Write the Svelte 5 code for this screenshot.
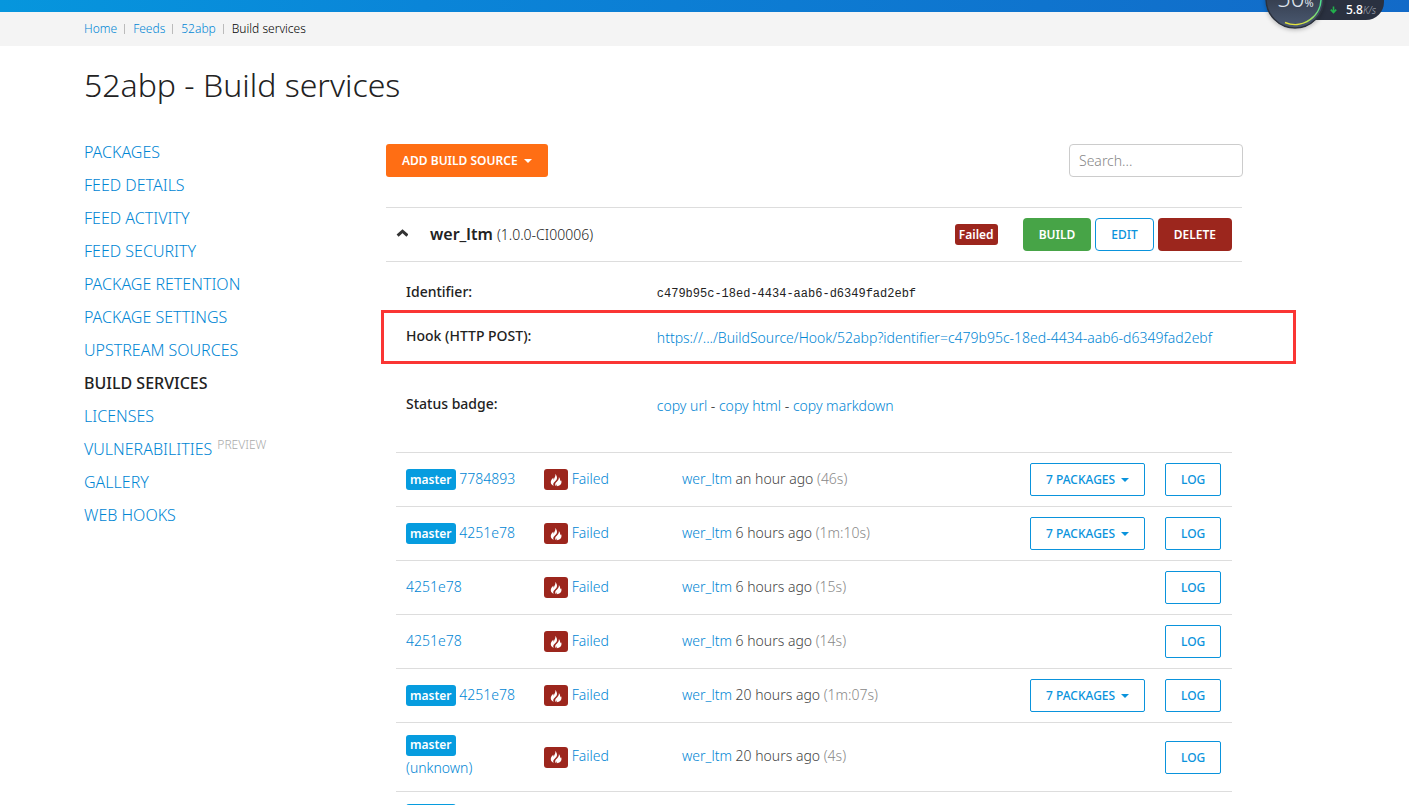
<script>
  const crumbs = ['Home', 'Feeds', '52abp'];

  const nav = [
    { label: 'Packages' },
    { label: 'Feed details' },
    { label: 'Feed activity' },
    { label: 'Feed security' },
    { label: 'Package retention' },
    { label: 'Package settings' },
    { label: 'Upstream sources' },
    { label: 'Build services', active: true },
    { label: 'Licenses' },
    { label: 'Vulnerabilities', tag: 'Preview' },
    { label: 'Gallery' },
    { label: 'Web hooks' }
  ];

  const builds = [
    { branch: 'master', commit: '7784893', when: 'an hour ago', took: '46s', packages: 7 },
    { branch: 'master', commit: '4251e78', when: '6 hours ago', took: '1m:10s', packages: 7 },
    { commit: '4251e78', when: '6 hours ago', took: '15s' },
    { commit: '4251e78', when: '6 hours ago', took: '14s' },
    { branch: 'master', commit: '4251e78', when: '20 hours ago', took: '1m:07s', packages: 7 },
    { branch: 'master', commit: '(unknown)', when: '20 hours ago', took: '4s' },
    { branch: 'master', commit: '(unknown)', when: '20 hours ago', took: '4s' }
  ];

  let search = $state('');
</script>

<div class="page">
  <div class="topbar"></div>

  <nav class="crumbs" aria-label="Breadcrumb">
    {#each crumbs as crumb}
      <a href="#top">{crumb}</a>
    {/each}
    <span>Build services</span>
  </nav>

  <div class="meter">
    <div class="speed">
      <svg width="7" height="8" viewBox="0 0 7 8" aria-hidden="true">
        <path d="M3.5 0.5V6.5M0.8 3.6L3.5 6.6L6.2 3.6" fill="none" stroke="#22b14c" stroke-width="1.6" />
      </svg>
      <span><b>5.8</b><i>K/s</i></span>
    </div>
    <div class="dial">
      <svg width="60" height="60" viewBox="0 0 60 60" aria-hidden="true">
        <defs>
          <linearGradient id="dial-fill" x1="0" y1="0" x2="0" y2="1">
            <stop offset="0.5" stop-color="#363f50" />
            <stop offset="1" stop-color="#4b5a72" />
          </linearGradient>
          <linearGradient id="dial-arc" x1="0" y1="1" x2="1" y2="0.4">
            <stop offset="0.3" stop-color="#e2e23c" />
            <stop offset="1" stop-color="#4fe08c" />
          </linearGradient>
        </defs>
        <circle cx="30" cy="30" r="29" fill="url(#dial-fill)" stroke="#2b313c" stroke-width="1.5" />
        <path d="M20 53.5A26 26 0 0 0 56 28" fill="none" stroke="url(#dial-arc)" stroke-width="1.5" />
      </svg>
      <span class="load">50<small>%</small></span>
    </div>
  </div>

  <div class="container">
    <h1>52abp - Build services</h1>

    <div class="columns">
      <aside>
        <ul>
          {#each nav as item}
            <li>
              <a href="#top" class:active={item.active}>{item.label}</a>{#if item.tag}<sup>{item.tag}</sup>{/if}
            </li>
          {/each}
        </ul>
      </aside>

      <main>
        <div class="toolbar">
          <button class="btn orange">Add build source <i class="caret"></i></button>
          <input type="text" placeholder="Search..." aria-label="Search" bind:value={search} />
        </div>

        <section class="source">
          <header>
            <svg class="chevron" width="12" height="12" viewBox="0 0 12 12" aria-hidden="true">
              <path d="M1.6 6.6L6.5 2.2L11.4 6.6" fill="none" stroke="#333" stroke-width="3" />
            </svg>
            <h2>wer_ltm <small>(1.0.0-CI00006)</small></h2>
            <span class="badge red">Failed</span>
            <div class="actions">
              <button class="btn green">Build</button>
              <button class="btn outline">Edit</button>
              <button class="btn danger">Delete</button>
            </div>
          </header>

          <dl>
            <div class="detail">
              <dt>Identifier:</dt>
              <dd><code>c479b95c-18ed-4434-aab6-d6349fad2ebf</code></dd>
            </div>
            <div class="detail marked">
              <dt>Hook (HTTP POST):</dt>
              <dd>
                <a href="#top">https://.../BuildSource/Hook/52abp?identifier=c479b95c-18ed-4434-aab6-d6349fad2ebf</a>
              </dd>
            </div>
            <div class="detail">
              <dt>Status badge:</dt>
              <dd>
                <a href="#top">copy url</a> - <a href="#top">copy html</a> - <a href="#top">copy markdown</a>
              </dd>
            </div>
          </dl>

          <table>
            <colgroup>
              <col class="c-commit" />
              <col class="c-status" />
              <col />
              <col class="c-packages" />
              <col class="c-log" />
            </colgroup>
            <tbody>
              {#each builds as build}
                <tr>
                  <td class="text">
                    {#if build.branch}<span class="badge blue">{build.branch}</span>{/if}
                    <a href="#top">{build.commit}</a>
                  </td>
                  <td class="text">
                    <span class="badge red icon">
                      <svg width="12" height="14" viewBox="0 0 12 15" preserveAspectRatio="none" aria-hidden="true">
                        <path d="M5.3 1C5.9 3.6 4.1 5 3.9 7.2C3.5 6.6 3.3 5.9 3.4 5C1.6 6.5 0.6 8.2 0.8 10.2C1 12 2.1 13.2 3.8 13.9C3 12.6 3.1 11.3 4 10.1C4.9 8.9 6.5 8 6.9 6.1C7.3 4.2 6.5 2.3 5.3 1Z" fill="#fff" />
                        <path d="M8.8 4.3C9.2 6 8.5 7.2 7.6 8.4C6.5 9.8 5 10.8 5.2 12.7C5.3 13.5 5.7 14 6.3 14.3C6.2 13.4 6.4 12.7 7 12C7.2 12.8 7.1 13.6 6.9 14.3C9.6 13.9 11.4 12.3 11.5 9.9C11.6 8.9 11.3 8.1 10.9 7.4C10.8 8 10.5 8.5 10.1 8.8C10.3 7.1 10 5.5 8.8 4.3Z" fill="#fff" />
                      </svg>
                    </span>
                    <a href="#top">Failed</a>
                  </td>
                  <td class="text when"><a href="#top">wer_ltm</a> {build.when} <span>({build.took})</span></td>
                  <td>
                    {#if build.packages}
                      <button class="btn outline small">{build.packages} packages <i class="caret"></i></button>
                    {/if}
                  </td>
                  <td><button class="btn outline small">Log</button></td>
                </tr>
              {/each}
            </tbody>
          </table>
        </section>
      </main>
    </div>
  </div>
</div>

<style>
  :global(body) {
    background: #fff;
    overflow: hidden;
  }

  .page {
    position: relative;
    height: 100vh;
    overflow: hidden;
    font-family: 'Noto Sans', 'Open Sans', sans-serif;
    font-size: 14px;
    font-weight: 300;
    line-height: 20px;
    color: #222;
  }

  a {
    color: #0086d4;
    text-decoration: none;
  }

  .topbar {
    height: 12px;
    background: linear-gradient(90deg, #0696dd, #0a85d8 30%, #126ac8);
  }

  .crumbs {
    display: flex;
    align-items: center;
    height: 34px;
    padding: 0 84px;
    background: #f4f4f4;
    font-size: 12px;
  }

  .crumbs a {
    display: flex;
    align-items: center;
  }

  .crumbs a::after {
    content: '';
    width: 1px;
    height: 10px;
    margin: 0 8px 0 7px;
    background: #bbb;
  }

  .crumbs span {
    color: #000;
  }

  .meter {
    position: absolute;
    top: -32px;
    right: 25px;
    width: 119px;
    height: 61px;
  }

  .speed {
    position: absolute;
    right: 0;
    bottom: 9px;
    display: flex;
    justify-content: flex-end;
    align-items: center;
    gap: 9px;
    width: 92px;
    height: 34px;
    box-sizing: border-box;
    padding: 14px 8px 0 0;
    border-radius: 0 0 18px 0;
    background: #2a3140;
    font-size: 10px;
    line-height: 12px;
    color: #a0a6b2;
  }

  .speed b {
    font-size: 12px;
    font-weight: 500;
    color: #fff;
  }

  .dial {
    position: absolute;
    left: 0;
    top: 1px;
    width: 60px;
    height: 60px;
    border-radius: 50%;
    box-shadow: 0 1px 4px rgba(0, 0, 0, 0.25);
  }

  .load {
    position: absolute;
    left: 12px;
    top: 14px;
    font-size: 24px;
    font-weight: 300;
    line-height: 30px;
    color: #dfe4ec;
  }

  .load small {
    font-size: 11px;
    font-weight: 400;
  }

  .container {
    padding: 0 166px 0 84px;
  }

  h1 {
    margin: 15px 0 35px;
    font-size: 32px;
    line-height: 48px;
    font-weight: 300;
    color: #222;
  }

  .columns {
    display: grid;
    grid-template-columns: 302px minmax(0, 1fr);
  }

  ul {
    margin: 0;
    padding: 0;
    list-style: none;
  }

  li {
    height: 33px;
    font-size: 16px;
    line-height: 17px;
    text-transform: uppercase;
    white-space: nowrap;
  }

  .active {
    color: #222;
    font-weight: 500;
  }

  sup {
    margin-left: 5px;
    font-size: 12px;
    line-height: 0;
    color: #aaa;
  }

  .toolbar {
    display: flex;
    justify-content: space-between;
    margin-bottom: 30px;
  }

  input {
    width: 174px;
    height: 33px;
    box-sizing: border-box;
    padding: 0 9px;
    border: 1px solid #ccc;
    border-radius: 4px;
    font: inherit;
    color: #222;
  }

  input::placeholder {
    color: #888;
    opacity: 1;
  }

  .btn {
    display: inline-flex;
    align-items: center;
    justify-content: center;
    height: 33px;
    padding: 0 15px;
    border: 1px solid transparent;
    border-radius: 4px;
    font-family: inherit;
    font-size: 12px;
    font-weight: 600;
    text-transform: uppercase;
    white-space: nowrap;
    color: #fff;
  }

  .caret {
    margin-left: 6px;
    border: 4px solid transparent;
    border-top-color: currentColor;
    border-bottom: 0;
  }

  .orange {
    background: #ff6e14;
    border-radius: 3px;
  }

  .green {
    background: #47a447;
  }

  .danger,
  .red {
    background: #9c261d;
  }

  .outline {
    border-color: #0a93dc;
    background: #fff;
    font-weight: 500;
    color: #0a93dc;
  }

  .small {
    border-radius: 2px;
  }

  .badge {
    display: inline-flex;
    align-items: center;
    height: 21px;
    padding: 0 4px;
    border-radius: 3px;
    font-size: 12px;
    font-weight: 600;
    color: #fff;
    vertical-align: middle;
  }

  .blue {
    background: #069cdf;
  }

  .icon {
    padding: 0 6px;
  }

  .source {
    margin-right: 1px;
    border-top: 1px solid #ddd;
  }

  header {
    display: flex;
    align-items: center;
    height: 53px;
    padding: 0 10px;
    border-bottom: 1px solid #ddd;
  }

  .chevron {
    margin-right: 22px;
  }

  h2 {
    flex: 1;
    margin: 0;
    font-size: 16px;
    font-weight: 600;
  }

  h2 small {
    font-size: 14px;
    font-weight: 300;
  }

  .actions {
    display: flex;
    gap: 4px;
    margin-left: 25px;
  }

  dl {
    margin: 0;
    padding: 20px 0 14px;
  }

  .detail {
    display: grid;
    grid-template-columns: 30% minmax(0, 1fr);
    align-items: start;
    position: relative;
    padding: 0 0 22px 20px;
  }

  dt {
    font-weight: 500;
  }

  dd {
    margin: 0;
    padding-top: 2px;
    white-space: nowrap;
  }

  code {
    display: block;
    font-family: 'Liberation Mono', monospace;
    font-size: 12px;
    font-weight: 400;
  }

  .marked {
    padding-bottom: 46px;
  }

  .marked::after {
    content: '';
    position: absolute;
    inset: -16px -54px 30px -5px;
    border: 3px solid #fa3534;
    pointer-events: none;
  }

  table {
    width: calc(100% - 20px);
    margin: 0 10px;
    table-layout: fixed;
    border-collapse: collapse;
  }

  .c-commit,
  .c-status {
    width: 138px;
  }

  .c-packages {
    width: 135px;
  }

  .c-log {
    width: 77px;
  }

  td {
    height: 33px;
    padding: 10px;
    border-top: 1px solid #ddd;
    line-height: 24px;
    vertical-align: middle;
  }

  .text {
    padding: 9px 10px 11px;
  }

  .when {
    color: #444;
  }

  .when span {
    color: #888;
  }
</style>
